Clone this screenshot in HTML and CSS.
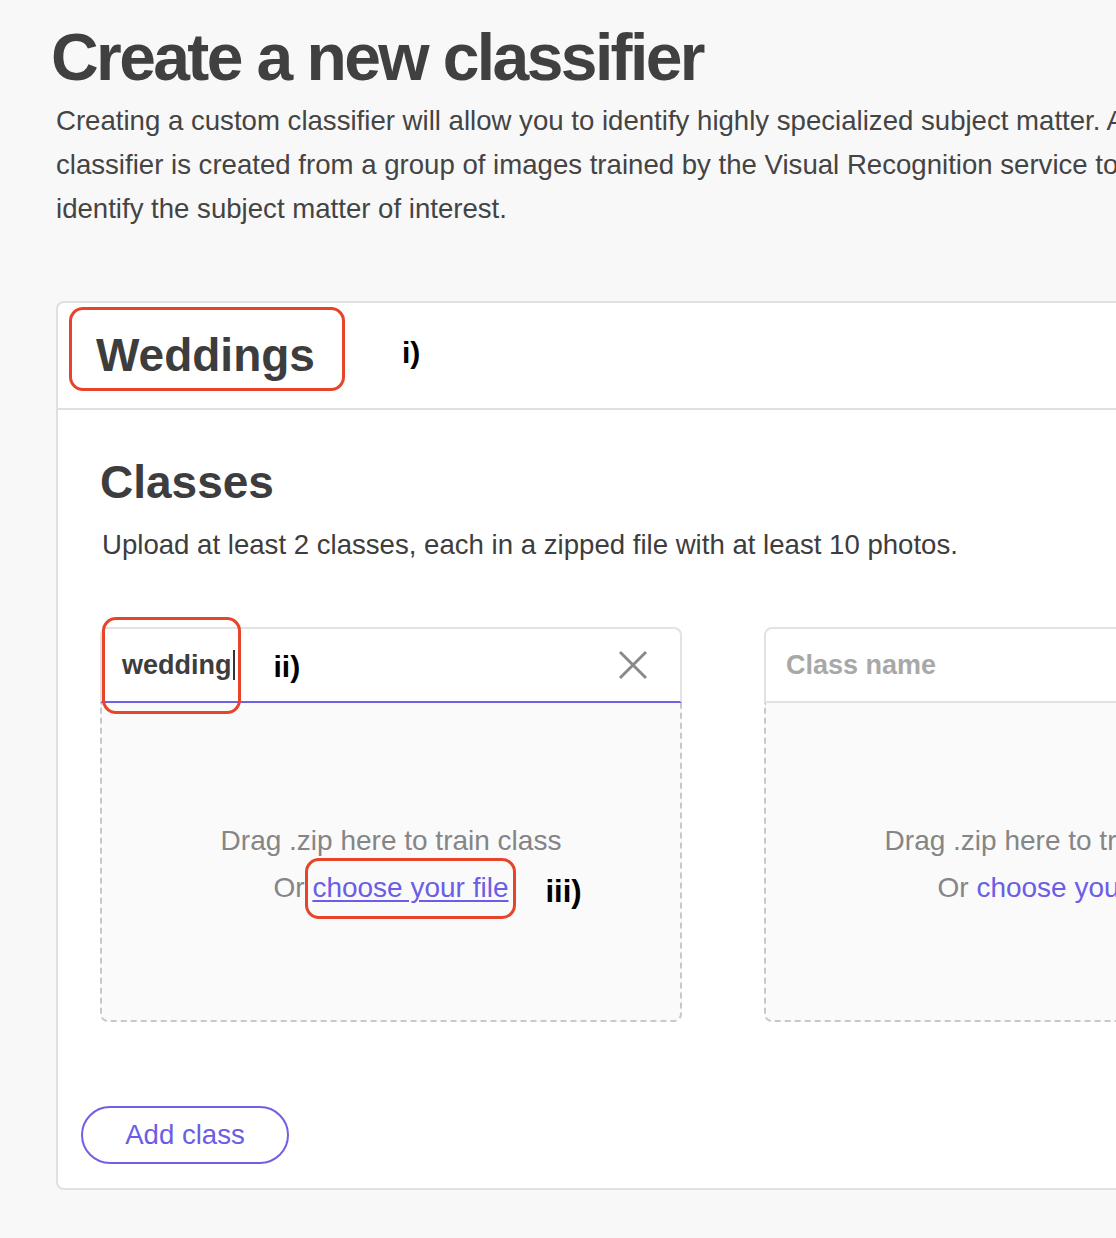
FILE: index.html
```html
<!DOCTYPE html>
<html>
<head>
<meta charset="utf-8">
<link rel="stylesheet" href="styles.css">
</head>
<body>
<div class="page">
  <h1 class="title">Create a new classifier</h1>
  <p class="intro">Creating a custom classifier will allow you to identify highly specialized subject matter. A<br>classifier is created from a group of images trained by the Visual Recognition service to<br>identify the subject matter of interest.</p>

  <section class="card">
    <div class="card-head">
      <span class="name mark mark-name">Weddings</span>
      <span class="note note-i">i)</span>
    </div>
    <div class="card-body">
      <h2 class="classes">Classes</h2>
      <p class="hint">Upload at least 2 classes, each in a zipped file with at least 10 photos.</p>
      <div class="boxes">
        <div class="box">
          <div class="box-head focused">
            <span class="value mark mark-value">wedding<span class="caret"></span></span>
            <span class="note note-ii">ii)</span>
            <svg class="close" width="30" height="30" viewBox="0 0 30 30"><path d="M2 2 L28 28 M28 2 L2 28" stroke="#8a8a8a" stroke-width="3" fill="none"/></svg>
          </div>
          <div class="drop">
            <div class="drop-line">Drag .zip here to train class</div>
            <div class="drop-line">Or <span class="mark mark-link"><a class="link u" href="#">choose your file</a><span class="note note-iii">iii)</span></span></div>
          </div>
        </div>
        <div class="box">
          <div class="box-head">
            <span class="placeholder">Class name</span>
          </div>
          <div class="drop">
            <div class="drop-line">Drag .zip here to train class</div>
            <div class="drop-line">Or <a class="link" href="#">choose your file</a></div>
          </div>
        </div>
      </div>
      <button class="add">Add class</button>
    </div>
  </section>
</div>
</body>
</html>
```

FILE: styles.css
```css
html, body {
  margin: 0;
  padding: 0;
  overflow: hidden;
}
body {
  background: #f8f8f8;
  font-family: "Liberation Sans", Arial, Helvetica, sans-serif;
  color: #3d3d3d;
  width: 1116px;
  height: 1238px;
}
.page {
  width: 1500px;
  padding: 22px 0 0 56px;
}
.title {
  margin: 0 0 0 -5px;
  font-size: 66px;
  line-height: 70px;
  font-weight: 700;
  letter-spacing: -2.6px;
  color: #404040;
}
.intro {
  margin: 7px 0 0 0;
  font-size: 27.6px;
  line-height: 44px;
  color: #444;
}
.card {
  margin-top: 70px;
  width: 1400px;
  background: #fff;
  border: 2px solid #e0e0e0;
  border-radius: 8px;
}
.card-head {
  height: 105px;
  border-bottom: 2px solid #e0e0e0;
  display: flex;
  align-items: center;
  padding-left: 38px;
}
.name {
  font-size: 46px;
  font-weight: 700;
  color: #3d3d3d;
  margin-top: -2px;
}
.mark { position: relative; }
.mark::after {
  content: "";
  position: absolute;
  border: 3px solid #e8442a;
  border-radius: 14px;
}
.mark-name::after { left: -27px; right: -30px; top: -21px; bottom: -9px; }
.note {
  color: #000;
  font-weight: 700;
  font-size: 30px;
}
.note-i { margin-left: 87px; margin-top: -6px; }
.card-body {
  padding: 44px 0 24px 42px;
}
.classes {
  margin: 0;
  font-size: 46px;
  line-height: 56px;
  font-weight: 700;
  color: #3d3d3d;
}
.hint {
  margin: 17px 0 0 2px;
  font-size: 27.6px;
  line-height: 36px;
  color: #3d3d3d;
}
.boxes {
  display: flex;
  gap: 82px;
  margin-top: 64px;
}
.box {
  width: 582px;
}
.box-head {
  height: 72px;
  border: 2px solid #e2e2e2;
  border-bottom: 2px solid #e2e2e2;
  border-radius: 8px 8px 0 0;
  background: #fff;
  display: flex;
  align-items: center;
  padding: 0 20px;
}
.box-head.focused { border-bottom-color: #6f61e4; }
.value {
  font-size: 27px;
  font-weight: 700;
  color: #3d3d3d;
  display: inline-flex;
  align-items: center;
}
.caret {
  display: inline-block;
  width: 2px;
  height: 30px;
  background: #333;
  margin-left: 1px;
}
.mark-value::after { left: -20px; right: -6px; top: -33px; bottom: -33px; }
.note-ii { margin-left: 39px; margin-top: 4px; }
.close { margin-left: auto; margin-right: 12px; }
.placeholder {
  font-size: 27px;
  font-weight: 700;
  color: #a8a8a8;
}
.drop {
  height: 319px;
  border: 2px dashed #c8c8c8;
  border-top: none;
  border-radius: 0 0 8px 8px;
  background: #fafafa;
  display: flex;
  flex-direction: column;
  justify-content: center;
  align-items: center;
  padding-top: 4px;
  box-sizing: border-box;
}
.drop-line {
  font-size: 28px;
  line-height: 47px;
  color: #858585;
  white-space: nowrap;
}
.link {
  color: #6c5de6;
  text-decoration: none;
}
.link.u { text-decoration: underline; text-decoration-thickness: 2px; text-underline-offset: 3px; }
.mark-link::after { left: -7px; right: -7px; top: -14px; bottom: -16px; }
.note-iii {
  position: absolute;
  left: calc(100% + 37px);
  top: -4px;
  font-size: 31px;
}
.add {
  margin: 84px 0 0 -19px;
  width: 208px;
  height: 58px;
  border: 2px solid #6f61e4;
  border-radius: 30px;
  background: #fff;
  color: #6c5de6;
  font-family: inherit;
  font-size: 27.6px;
  display: block;
}
```
